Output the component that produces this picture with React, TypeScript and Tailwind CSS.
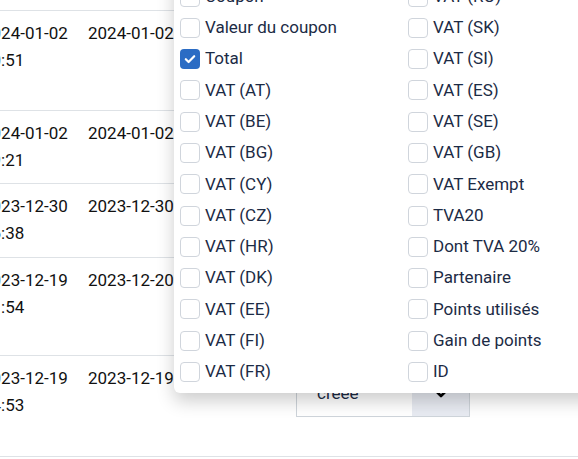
import React from "react";

type Row = { date: string; time: string; date2: string; h: string };

const rows: Row[] = [
  { date: "2024-01-02", time: "10:51", date2: "2024-01-02", h: "h-[100px]" },
  { date: "2024-01-02", time: "09:21", date2: "2024-01-02", h: "h-[73px]" },
  { date: "2023-12-30", time: "16:38", date2: "2023-12-30", h: "h-[74px]" },
  { date: "2023-12-19", time: "11:54", date2: "2023-12-20", h: "h-[98px]" },
  { date: "2023-12-19", time: "14:53", date2: "2023-12-19", h: "h-[101px]" },
];

const leftCols = [
  "Client",
  "Coupon",
  "Valeur du coupon",
  "Total",
  "VAT (AT)",
  "VAT (BE)",
  "VAT (BG)",
  "VAT (CY)",
  "VAT (CZ)",
  "VAT (HR)",
  "VAT (DK)",
  "VAT (EE)",
  "VAT (FI)",
  "VAT (FR)",
];

const rightCols = [
  "VAT (PT)",
  "VAT (RO)",
  "VAT (SK)",
  "VAT (SI)",
  "VAT (ES)",
  "VAT (SE)",
  "VAT (GB)",
  "VAT Exempt",
  "TVA20",
  "Dont TVA 20%",
  "Partenaire",
  "Points utilisés",
  "Gain de points",
  "ID",
];

function StatusSelect() {
  return (
    <div className="flex h-[48px] w-[174px] border border-[#ced4da] bg-white">
      <div className="flex flex-1 items-center pl-[20px] text-[17px] text-[#1c2b45]">
        créée
      </div>
      <div className="flex w-[57px] items-center justify-center bg-[#e8ebf2]">
        <svg width="14" height="9" viewBox="0 0 14 9" fill="none">
          <path d="M2 2l5 5 5-5" stroke="#000" strokeWidth="2.6" strokeLinecap="round" strokeLinejoin="round" />
        </svg>
      </div>
    </div>
  );
}

function Check({ checked }: { checked: boolean }) {
  if (checked) {
    return (
      <span className="flex h-[20px] w-[20px] shrink-0 items-center justify-center rounded-[4px] bg-[#2b6cc4]">
        <svg width="12" height="10" viewBox="0 0 12 10" fill="none">
          <path d="M1.8 5.2l2.8 2.8L10.2 2.2" stroke="#fff" strokeWidth="2.2" strokeLinecap="round" strokeLinejoin="round" />
        </svg>
      </span>
    );
  }
  return <span className="h-[20px] w-[20px] shrink-0 rounded-[4px] border border-[#d0d5dc] bg-white" />;
}

function ColumnList({ items }: { items: string[] }) {
  return (
    <div className="flex w-[228px] flex-col">
      {items.map((label) => (
        <label key={label} className="flex h-[31.27px] items-center gap-[5px] text-[17px] text-[#1c2b45]">
          <Check checked={label === "Total"} />
          <span className="whitespace-nowrap">{label}</span>
        </label>
      ))}
    </div>
  );
}

export default function App() {
  return (
    <div
      className="relative h-[459px] w-[578px] overflow-hidden bg-white"
      style={{ fontFamily: "Roboto, 'Liberation Sans', sans-serif" }}
    >
      {/* orders table, scrolled slightly to the right */}
      <div className="ml-[-18px] w-[620px] text-[17px] leading-[27px] text-[#111]">
        <div className="h-[10px]" />
        {rows.map((r, i) => (
          <div key={i} className={`flex border-t border-[#dee2e6] pt-[9px] ${r.h}`}>
            <div className="w-[106px]">
              <div>{r.date}</div>
              <div>{r.time}</div>
            </div>
            <div className="w-[208px] whitespace-nowrap">{r.date2}</div>
            <div className="pt-[4px]">
              <StatusSelect />
            </div>
          </div>
        ))}
        <div className="border-t border-[#dee2e6]" />
      </div>

      {/* column visibility dropdown */}
      <div className="absolute bottom-[66px] left-[174px] flex w-[470px] rounded-b-[6px] bg-white pb-[5.5px] pl-[6px] shadow-[0_8px_18px_rgba(0,0,0,0.2)]">
        <ColumnList items={leftCols} />
        <ColumnList items={rightCols} />
      </div>
    </div>
  );
}
